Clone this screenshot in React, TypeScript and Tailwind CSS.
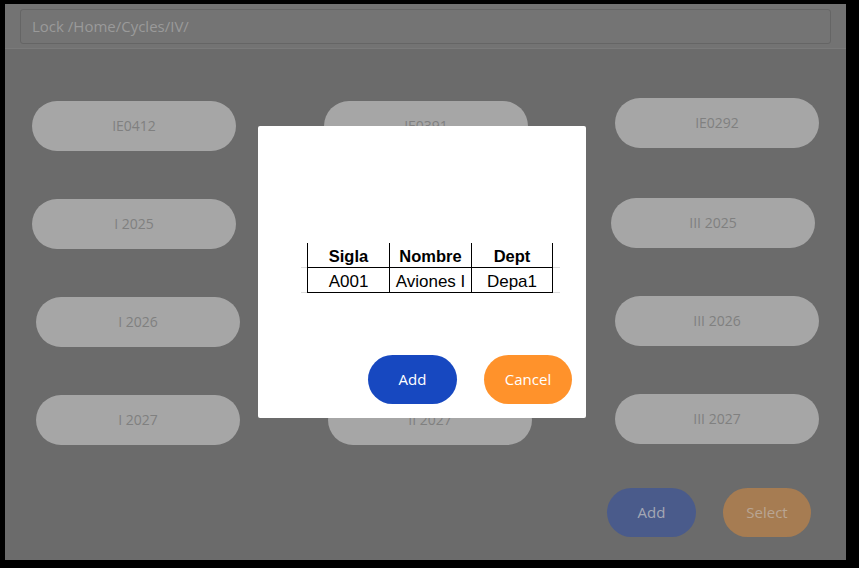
import React from "react";

const font = { fontFamily: '"Open Sans", "Noto Sans", sans-serif' };

function Pill({ label, className }: { label: string; className: string }) {
  return (
    <div
      className={
        "flex h-[50px] w-[204px] items-center justify-center rounded-full bg-[#a6a6a6] pb-[1px] text-[14px] text-[#808080] " +
        className
      }
    >
      {label}
    </div>
  );
}

export default function App() {
  return (
    <div className="relative h-[568px] w-[859px] overflow-hidden bg-black pl-[5px] pt-[4px]" style={font}>
      <div className="flex h-[556px] w-[841px] flex-col bg-[#6b6b6b]">
        {/* header */}
        <div className="h-[45px] border-b border-[#7a7a7a] bg-[#737373] px-[15px] pt-[5px]">
          <div className="flex h-[35px] items-center rounded-[3px] border border-[#656565] bg-[#747474] px-[11px] text-[15px] text-[#9a9a9a]">
            Lock /Home/Cycles/IV/
          </div>
        </div>

        {/* pills */}
        <div className="flex pt-[52px]">
          <div className="ml-[27px] flex flex-col gap-[48px]">
            <Pill label="IE0412" className="" />
            <Pill label="I 2025" className="" />
            <Pill label="I 2026" className="ml-[4px]" />
            <Pill label="I 2027" className="ml-[4px]" />
          </div>
          <div className="ml-[84px] flex flex-col gap-[48px]">
            <Pill label="IE0391" className="" />
            <Pill label="II 2025" className="" />
            <Pill label="II 2026" className="" />
            <Pill label="II 2027" className="ml-[4px]" />
          </div>
          <div className="ml-[83px] -mt-[3px] flex flex-col">
            <Pill label="IE0292" className="" />
            <Pill label="III 2025" className="-ml-[4px] mt-[50px]" />
            <Pill label="III 2026" className="mt-[48px]" />
            <Pill label="III 2027" className="mt-[48px]" />
          </div>
        </div>

        {/* bottom buttons */}
        <div className="mt-auto mb-[23px] flex justify-end gap-[27px] pr-[35px]">
          <div className="flex h-[49px] w-[89px] items-center justify-center rounded-full bg-[#4a5b8b] text-[15px] text-[#a4a8b4]">
            Add
          </div>
          <div className="flex h-[49px] w-[88px] items-center justify-center rounded-full bg-[#a67c52] text-[15px] text-[#b9a592]">
            Select
          </div>
        </div>
      </div>

      {/* modal */}
      <div className="absolute left-[258px] top-[126px] flex h-[292px] w-[328px] flex-col rounded-[2px] bg-white">
        <div
          className="ml-[43px] mt-[117px] flex flex-col text-black"
          style={{ fontFamily: '"Liberation Sans", Arial, sans-serif' }}
        >
          <div className="flex h-[25px]">
            <div className="w-[6px] border-b border-[#dcdcdc]" />
            <div className="flex w-[82px] items-center justify-center border-b border-l border-black pt-[3px] text-[16.5px] font-bold">
              Sigla
            </div>
            <div className="flex w-[82px] items-center justify-center border-b border-l border-black pt-[3px] text-[16.5px] font-bold">
              Nombre
            </div>
            <div className="flex w-[82px] items-center justify-center border-b border-l border-r border-black pt-[3px] text-[16.5px] font-bold">
              Dept
            </div>
            <div className="w-[7px] border-b border-[#dcdcdc]" />
          </div>
          <div className="flex h-[25px]">
            <div className="w-[6px] border-b border-[#dcdcdc]" />
            <div className="flex w-[82px] items-center justify-center border-b border-l border-black pt-[3px] text-[17px]">
              A001
            </div>
            <div className="flex w-[82px] items-center justify-center border-b border-l border-black pt-[3px] text-[17px]">
              Aviones I
            </div>
            <div className="flex w-[82px] items-center justify-center border-b border-l border-r border-black pt-[3px] text-[17px]">
              Depa1
            </div>
            <div className="w-[7px] border-b border-[#dcdcdc]" />
          </div>
        </div>
        <div className="mt-auto mb-[14px] flex justify-end gap-[27px] pr-[14px]">
          <div className="flex h-[49px] w-[89px] items-center justify-center rounded-full bg-[#1748c0] text-[15px] text-white">
            Add
          </div>
          <div className="flex h-[49px] w-[88px] items-center justify-center rounded-full bg-[#ff922b] text-[15px] text-white">
            Cancel
          </div>
        </div>
      </div>
    </div>
  );
}
